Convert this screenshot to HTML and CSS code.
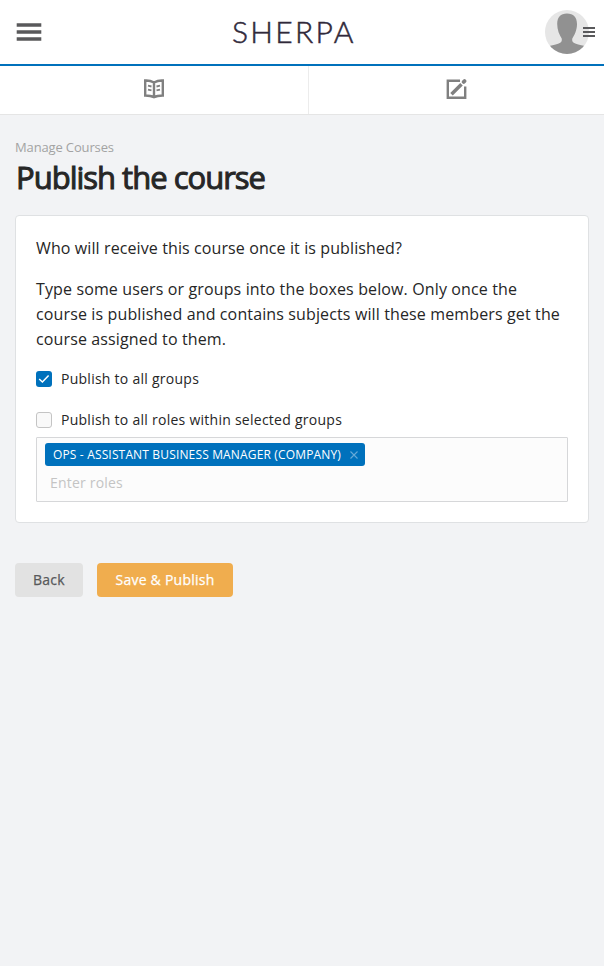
FILE: index.html
```html
<!DOCTYPE html>
<html lang="en">
<head>
<meta charset="utf-8">
<title>Publish the course</title>
<link rel="stylesheet" href="styles.css">
</head>
<body>
<header class="topbar">
  <svg class="menu" width="26" height="18" viewBox="0 0 26 18"><path d="M2.500 2h21M2.500 9h21M2.500 16h21" stroke="#59595b" stroke-width="3.600" stroke-linecap="square"/></svg>
  <div class="brand">SHERPA</div>
  <div class="account">
    <svg width="51" height="44" viewBox="0 0 51 44">
      <defs><clipPath id="round"><circle cx="22" cy="22" r="22"/></clipPath></defs>
      <circle cx="22" cy="22" r="22" fill="#e6e6e6"/>
      <path clip-path="url(#round)" fill="#919191" d="M22 3.500C15.500 3.500 12.200 7.500 12.200 14c0 6 2.200 11 4.500 14.500C17.500 33 15 33.500 4 36v8h36v-8c-11-2.500-13.500-3-12.700-7.500C29.600 25 32 20 32 14 32 7.500 28.500 3.500 22 3.500z"/>
      <path d="M38 18h12M38 22h12M38 26h12" stroke="#59595b" stroke-width="1.800"/>
    </svg>
  </div>
</header>
<nav class="tabs">
  <a class="tab"><svg width="20" height="20" viewBox="0 0 20 20" fill="none" stroke="#808080"><path stroke-width="2.400" d="M1.200 1.500Q6 1.200 10 3.500Q14 1.200 18.800 1.500V16.500Q13 16.500 10 18.200Q7 16.500 1.200 16.500zM10 3.500V18.500"/><path stroke-width="1.800" d="M4 6.700l3.500.8M4 10.600l3.500.8M16 6.700l-3.500.8M16 10.600l-3.500.8"/></svg></a>
  <a class="tab"><svg width="21" height="21" viewBox="0 0 21 21" fill="none" stroke="#808080"><path stroke-width="2.400" d="M14 1.800H1.800V18.800H19.200V7.500"/><path stroke-width="3.600" d="M5.500 15.200l10-10"/><path stroke-width="3.800" d="M17.700 2.900l.8-.8" stroke-linecap="round"/></svg></a>
</nav>
<main class="page">
  <div class="crumb">Manage Courses</div>
  <h1 class="title">Publish the course</h1>
  <section class="card">
    <p class="text">Who will receive this course once it is published?</p>
    <p class="text">Type some users or groups into the boxes below. Only once the course is published and contains subjects will these members get the course assigned to them.</p>
    <div class="option">
      <span class="box checked"><svg width="16" height="16" viewBox="0 0 16 16"><path d="M3.200 8l3.200 3 6.200-6.500" fill="none" stroke="#fff" stroke-width="1.500"/></svg></span>
      <span>Publish to all groups</span>
    </div>
    <div class="option second">
      <span class="box"></span>
      <span>Publish to all roles within selected groups</span>
    </div>
    <div class="field">
      <div class="chip"><span class="chip-label">OPS - ASSISTANT BUSINESS MANAGER (COMPANY)</span><svg width="8" height="8" viewBox="0 0 8 8"><path d="M.5.5l7 7M7.500.5l-7 7" stroke="#66a9d7" stroke-width="1.100"/></svg></div>
      <div class="placeholder">Enter roles</div>
    </div>
  </section>
  <div class="actions">
    <button class="btn back">Back</button>
    <button class="btn save">Save &amp; Publish</button>
  </div>
</main>
</body>
</html>
```

FILE: styles.css
```css
* { box-sizing: border-box; }
body { margin: 0; min-height: 966px; background: #f2f3f5; color: #262626; font-family: "Open Sans", sans-serif; }
svg { display: block; flex: none; }
.topbar { display: grid; grid-template-columns: 216px 1fr auto; align-items: center; height: 66px; padding: 0 8px 0 16px; background: #fff; border-bottom: 2px solid #0071bc; }
.brand { padding-bottom: 3px; font-family: Lato, sans-serif; font-weight: 300; font-size: 30px; line-height: 36px; letter-spacing: 2.3px; color: #30293a; -webkit-text-stroke: .5px #30293a; }
.tabs { display: flex; height: 49px; background: #fff; border-bottom: 1px solid #e5e5e5; }
.tab { display: flex; flex: 0 0 309px; justify-content: center; padding-top: 13px; border-right: 1px solid #ececec; }
.tab + .tab { flex: 1; border: 0; }
.page { padding: 22px 15px 0; }
.crumb { font-size: 13px; line-height: 20px; letter-spacing: -.14px; color: #a3a3a3; }
.title { margin: 0 0 18px; padding-left: 1px; font-size: 31px; font-weight: 400; line-height: 40px; letter-spacing: -1px; -webkit-text-stroke: 1px #262626; }
.card { height: 308px; padding: 20px; background: #fff; border: 1px solid #dfe1e3; border-radius: 4px; }
.text { margin: 0 0 16px; font-size: 16px; line-height: 25px; letter-spacing: .105px; }
.text + .text { letter-spacing: .13px; }
.option { display: flex; align-items: center; gap: 9px; height: 22px; font-size: 14px; line-height: 22px; letter-spacing: .26px; }
.second { margin-top: 19px; }
.box { width: 16px; height: 16px; border: 1px solid #c4c4c4; border-radius: 3px; background: #f9f9f9; }
.checked { border: 0; background: #0071bc; }
.field { height: 65px; margin-top: 6px; padding: 5px 8px; border: 1px solid #d6d7d9; border-radius: 1px; background: #fcfcfc; }
.chip { display: flex; align-items: center; width: 320px; height: 23px; padding: 0 7px 0 8px; justify-content: space-between; border-radius: 3px; background: #0071bc; color: #fff; font-size: 12px; line-height: 23px; letter-spacing: .155px; }
.chip-label { white-space: nowrap; }
.placeholder { margin: 7px 0 0 5px; font-size: 14px; line-height: 20px; letter-spacing: .2px; color: #c4c4c4; }
.actions { display: flex; gap: 14px; margin-top: 40px; }
.btn { height: 34px; padding: 0; border: 0; border-radius: 4px; font: 400 14px/34px "Open Sans", sans-serif; letter-spacing: .24px; -webkit-text-stroke: .25px; }
.back { width: 68px; background: #e2e2e2; color: #58595b; }
.save { width: 136px; background: #f0ad4e; color: #fff; }
```
